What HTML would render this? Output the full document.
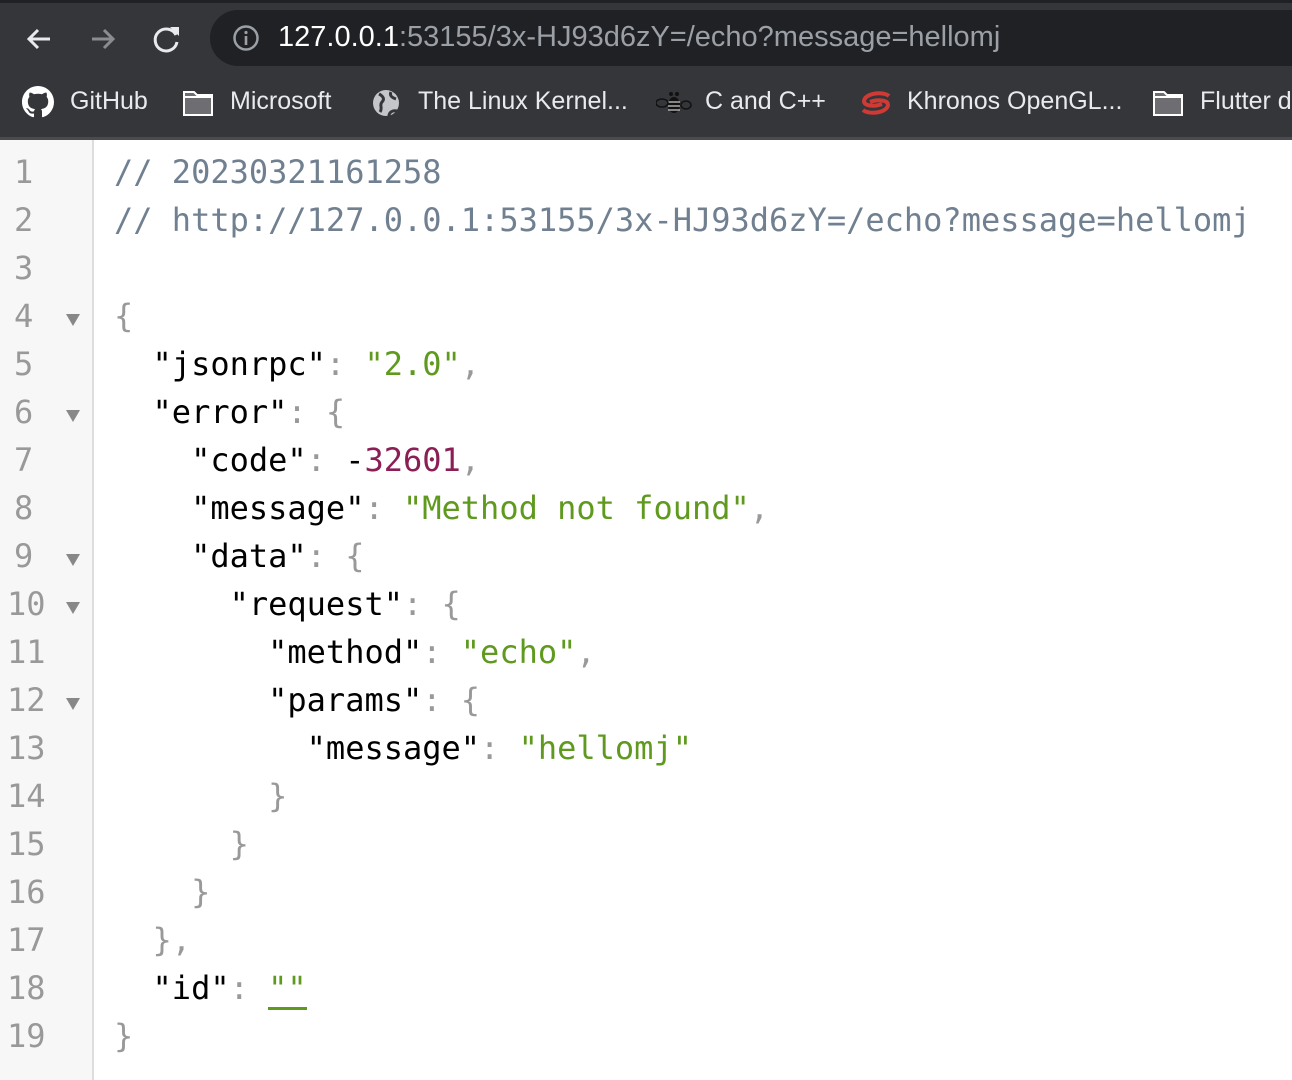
<!DOCTYPE html>
<html><head><meta charset="utf-8"><style>
*{margin:0;padding:0;box-sizing:border-box}
body{width:1292px;height:1080px;overflow:hidden;background:#fff;font-family:"Liberation Sans",sans-serif;position:relative}
#top{position:absolute;left:0;top:0;width:1292px;height:140px;background:#35363a}
#strip{position:absolute;left:0;top:0;width:1292px;height:3px;background:#202124}
#pill{position:absolute;left:210px;top:10px;width:1120px;height:56px;border-radius:28px;background:#202124}
#url{position:absolute;left:278px;top:21px;font-size:29px;color:#9aa0a6;white-space:nowrap}
#url b{color:#fff;font-weight:normal}
#bb{position:absolute;top:87px;font-size:25px;color:#e8eaed;white-space:nowrap}
.bm{position:absolute;top:0;white-space:nowrap}
#sep{position:absolute;left:0;top:137px;width:1292px;height:3px;background:#4a4b4f}
#gut{position:absolute;left:0;top:140px;width:94px;height:940px;background:#f7f7f7;border-right:2px solid #dddddd}
.ln{position:absolute;font-family:"DejaVu Sans Mono",monospace;font-size:32px;color:#999;line-height:48px}
.tri{position:absolute;left:66px;width:0;height:0;border-left:7px solid transparent;border-right:7px solid transparent;border-top:12px solid #888}
#code{position:absolute;left:114px;top:148px;font-family:"DejaVu Sans Mono",monospace;font-size:32px;line-height:48px;white-space:pre;color:#000}
.c{color:#708090}.s{color:#5f9a1f}.n{color:#8b1e55}.p{color:#999}
</style></head><body>
<div id="top"></div><div id="strip"></div>
<svg style="position:absolute;left:24px;top:24px" width="30" height="30" viewBox="0 0 30 30"><path d="M26 15H5M14 6l-9 9 9 9" stroke="#e8eaed" stroke-width="3" fill="none"/></svg>
<svg style="position:absolute;left:88px;top:24px" width="30" height="30" viewBox="0 0 30 30"><path d="M4 15h21M16 6l9 9-9 9" stroke="#8a8c90" stroke-width="3" fill="none"/></svg>
<svg style="position:absolute;left:151px;top:23px" width="32" height="32" viewBox="0 0 32 32"><path d="M25 12A11 11 0 1 0 26 19" stroke="#e8eaed" stroke-width="3" fill="none"/><path d="M19 4h9v9z" fill="#e8eaed"/></svg>
<div id="pill"></div>
<svg style="position:absolute;left:232px;top:24px" width="28" height="28" viewBox="0 0 28 28"><circle cx="14" cy="14" r="11.5" stroke="#9aa0a6" stroke-width="2.5" fill="none"/><rect x="12.7" y="12" width="2.6" height="9" fill="#9aa0a6"/><circle cx="14" cy="8.5" r="1.6" fill="#9aa0a6"/></svg>
<div id="url"><b>127.0.0.1</b>:53155/3x-HJ93d6zY=/echo?message=hellomj</div>
<svg style="position:absolute;left:22px;top:86px" width="32" height="32" viewBox="0 0 16 16"><path fill="#fff" d="M8 0C3.580 0 0 3.58 0 8c0 3.54 2.29 6.53 5.47 7.59.4.07.55-.17.55-.38 0-.19-.01-.82-.01-1.490-2.01.37-2.53-.49-2.69-.94-.09-.23-.48-.94-.82-1.13-.28-.15-.68-.52-.01-.53.63-.01 1.080.58 1.230.82.72 1.21 1.87.87 2.33.66.07-.52.28-.87.51-1.07-1.78-.2-3.64-.89-3.64-3.95 0-.87.31-1.59.82-2.150-.08-.2-.36-1.02.08-2.12 0 0 .67-.21 2.2.82.64-.18 1.32-.27 2-.27.68 0 1.36.09 2 .27 1.53-1.04 2.2-.82 2.2-.82.44 1.1.16 1.92.08 2.12.51.56.82 1.27.82 2.15 0 3.07-1.87 3.75-3.65 3.950.29.25.54.73.54 1.48 0 1.07-.01 1.93-.01 2.2 0 .21.15.46.55.38A8.013 8.013 0 0016 8c0-4.42-3.58-8-8-8z"/></svg>
<svg style="position:absolute;left:182px;top:89px" width="32" height="28" viewBox="0 0 32 28"><path d="M2 3h10l3 3h15v20H2z" fill="#6e6e72" stroke="#fff" stroke-width="2"/><path d="M2 8h28" stroke="#fff" stroke-width="2"/></svg>
<svg style="position:absolute;left:371px;top:88px" width="30" height="30" viewBox="0 0 30 30"><circle cx="15" cy="15" r="13" fill="#c5c6c9"/><path d="M8 6c4 2 6 5 3 8s1 6-2 10M20 4c-2 4 2 6 5 7M18 28c0-4 4-6 8-5" stroke="#35363a" stroke-width="3" fill="none"/></svg>
<svg style="position:absolute;left:656px;top:91px" width="36" height="24" viewBox="0 0 36 24"><ellipse cx="18" cy="14" rx="6" ry="8" fill="#111"/><path d="M12 11h12M12 15h12M12 19h12" stroke="#ccc" stroke-width="1.2"/><ellipse cx="6" cy="12" rx="6" ry="4" fill="none" stroke="#111" stroke-width="1.5"/><ellipse cx="30" cy="14" rx="5" ry="4" fill="none" stroke="#111" stroke-width="1.5"/><circle cx="15" cy="3" r="2" fill="#111"/><circle cx="21" cy="3" r="2" fill="#111"/></svg>
<svg style="position:absolute;left:859px;top:91px" width="34" height="24" viewBox="0 0 34 24"><path d="M30 5C24 0 6 2 5 10c0 5 10 6 18 3M4 19c6 5 24 3 25-5 0-5-10-6-18-3" stroke="#d03a35" stroke-width="4" fill="none"/></svg>
<svg style="position:absolute;left:1152px;top:89px" width="32" height="28" viewBox="0 0 32 28"><path d="M2 3h10l3 3h15v20H2z" fill="#6e6e72" stroke="#fff" stroke-width="2"/><path d="M2 8h28" stroke="#fff" stroke-width="2"/></svg>
<div id="bb">
<span class="bm" style="left:70px">GitHub</span>
<span class="bm" style="left:230px">Microsoft</span>
<span class="bm" style="left:418px">The Linux Kernel...</span>
<span class="bm" style="left:705px">C and C++</span>
<span class="bm" style="left:907px">Khronos OpenGL...</span>
<span class="bm" style="left:1200px">Flutter d</span>
</div>
<div id="sep"></div>
<div id="gut"></div>
<div class="ln" style="top:148px;left:14px">1<br>2<br>3<br>4<br>5<br>6<br>7<br>8<br>9</div>
<div class="ln" style="top:580px;left:7px">10<br>11<br>12<br>13<br>14<br>15<br>16<br>17<br>18<br>19</div>
<div class="tri" style="top:314px"></div>
<div class="tri" style="top:410px"></div>
<div class="tri" style="top:554px"></div>
<div class="tri" style="top:602px"></div>
<div class="tri" style="top:698px"></div>
<div id="code"><span class="c">// 20230321161258</span>
<span class="c">// http://127.0.0.1:53155/3x-HJ93d6zY=/echo?message=hellomj</span>

<span class="p">{</span>
  "jsonrpc"<span class="p">:</span> <span class="s">"2.0"</span><span class="p">,</span>
  "error"<span class="p">:</span> <span class="p">{</span>
    "code"<span class="p">:</span> -<span class="n">32601</span><span class="p">,</span>
    "message"<span class="p">:</span> <span class="s">"Method not found"</span><span class="p">,</span>
    "data"<span class="p">:</span> <span class="p">{</span>
      "request"<span class="p">:</span> <span class="p">{</span>
        "method"<span class="p">:</span> <span class="s">"echo"</span><span class="p">,</span>
        "params"<span class="p">:</span> <span class="p">{</span>
          "message"<span class="p">:</span> <span class="s">"hellomj"</span>
        <span class="p">}</span>
      <span class="p">}</span>
    <span class="p">}</span>
  <span class="p">},</span>
  "id"<span class="p">:</span> <span class="s" style="border-bottom:3px solid #5f9a1f">""</span>
<span class="p">}</span></div>
</body></html>
